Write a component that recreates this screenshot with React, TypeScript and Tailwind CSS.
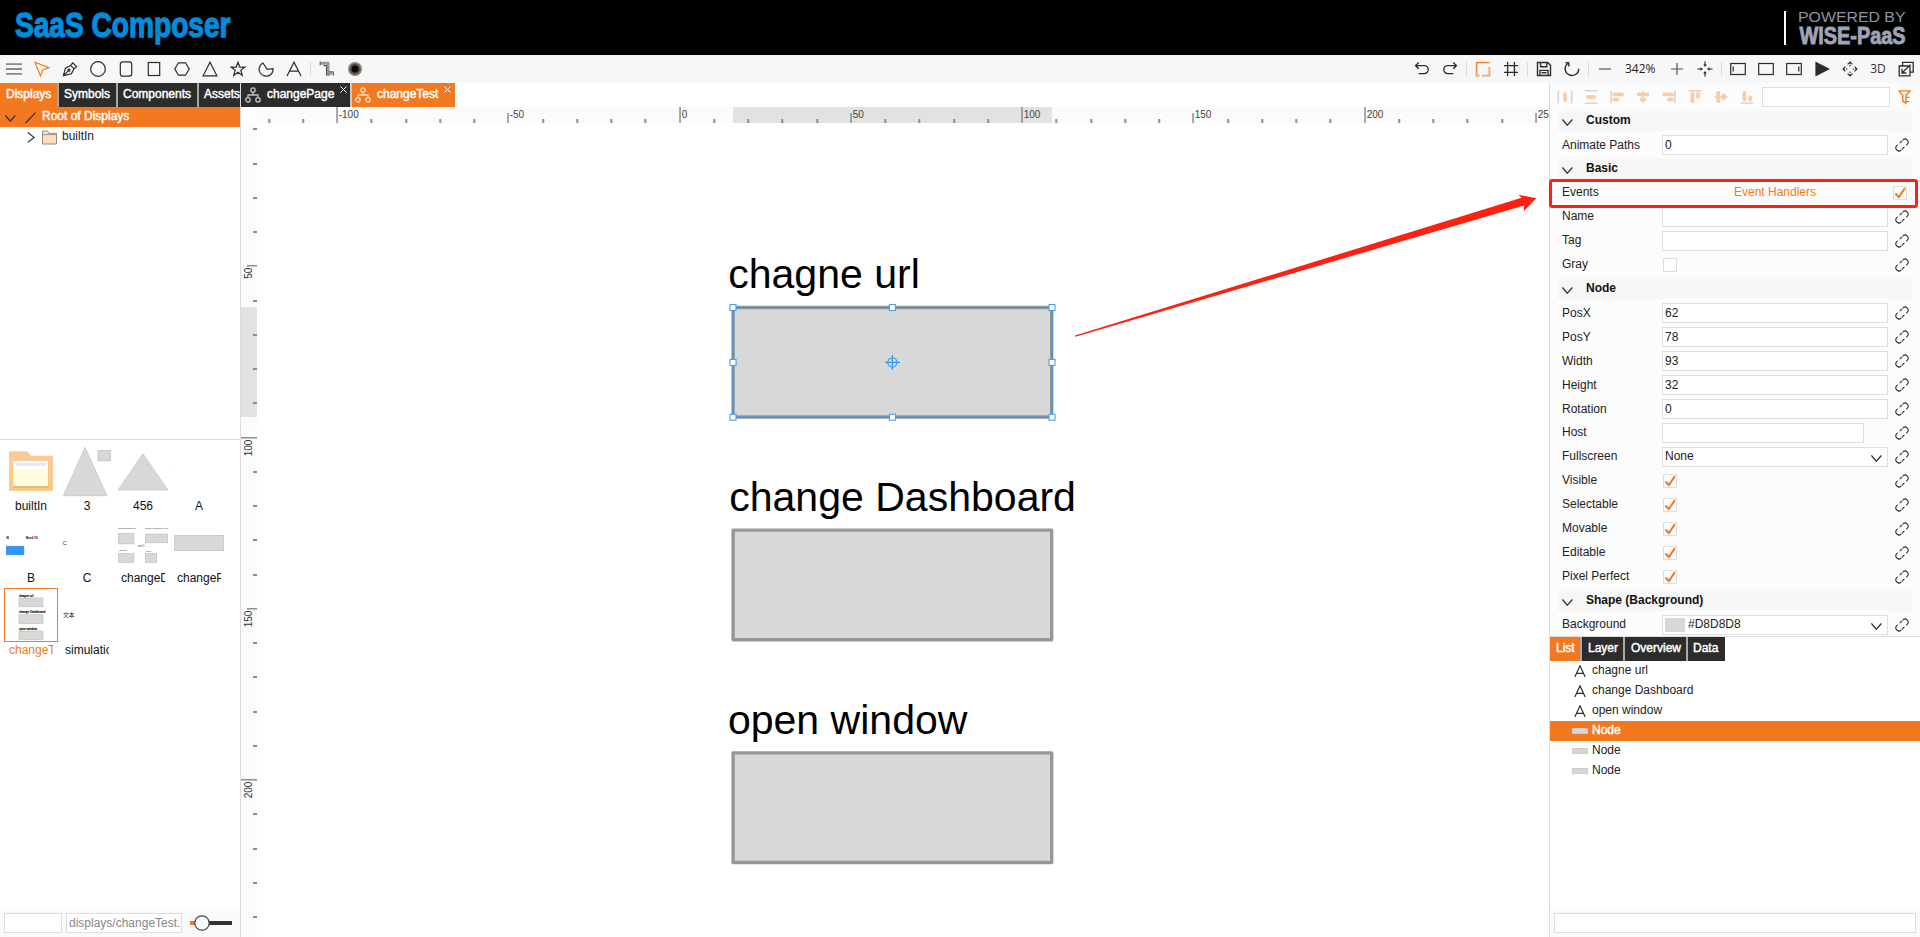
import React from "react";

type Kids = { children?: React.ReactNode };

const INK = "#2c2c2c";
const ORANGE = "#f37920";
const SCALE = 3.425;
const ORIGIN_X = 680;
const ORIGIN_Y = 95.1;

const BOLDISH = "[-webkit-text-stroke:0.45px_currentColor]";

function Icon({ children, color = INK, w = 1.2 }: Kids & { color?: string; w?: number }) {
  return (
    <svg className="h-4 w-4 shrink-0" viewBox="0 0 16 16" fill="none" stroke={color} strokeWidth={w}>
      {children}
    </svg>
  );
}

function Sep() {
  return <span className="-mx-1 h-3.5 w-px shrink-0 bg-[#dcdcdc]" />;
}

function Header() {
  return (
    <header className="flex h-[55px] shrink-0 items-start justify-between bg-black">
      <svg className="h-[55px] w-60 overflow-visible" viewBox="0 0 240 55">
        <text x="15" y="37" textLength="215.5" lengthAdjust="spacingAndGlyphs" fontSize="34.5" fontWeight="700" fill="#008cdc" stroke="#008cdc" strokeWidth="1.3">
          SaaS Composer
        </text>
      </svg>
      <div className="flex pt-[11px] pr-3">
        <span className="h-[34px] w-[2px] bg-white" />
        <svg className="h-9 w-[122px] overflow-visible" viewBox="1786 11 122 36">
          <text x="1798" y="22" textLength="107.5" lengthAdjust="spacingAndGlyphs" fontSize="15" fill="#8c93a5">
            POWERED BY
          </text>
          <text x="1799.5" y="43.8" textLength="106" lengthAdjust="spacingAndGlyphs" fontSize="23.5" fontWeight="700" fill="#9ea5b8" stroke="#9ea5b8" strokeWidth="0.9">
            WISE-PaaS
          </text>
        </svg>
      </div>
    </header>
  );
}

function Toolbar() {
  return (
    <div className="flex h-7 shrink-0 items-center justify-between bg-[#f7f7f7] pr-[6px] pl-[6px]">
      <div className="flex items-center gap-3">
        <Icon color="#8a8a8a" w={1.8}><path d="M0 3.2h16M0 8h16M0 12.8h16" /></Icon>
        <Icon color={ORANGE}><path d="M1 1.2L14.8 6.7L8.6 9L6.4 15Z" /></Icon>
        <Icon>
          <path d="M1.4 14.6L3.4 7.2L8.6 4.4L12 7.8L9.4 12.8ZM1.4 14.6L6.6 9.6M8.6 4.4L10.8 1.8L14.6 5.6L12 7.8" />
          <circle cx="7" cy="9.2" r="1" />
        </Icon>
        <Icon><circle cx="8" cy="8" r="7.3" /></Icon>
        <Icon><rect x="2.3" y="0.8" width="11.4" height="14.4" rx="2.4" /></Icon>
        <Icon><rect x="2.3" y="1.5" width="11.4" height="13" /></Icon>
        <Icon><path d="M4.4 1.8h7.2L15.2 8l-3.6 6.2H4.4L0.8 8Z" /></Icon>
        <Icon><path d="M8 1.2L14.9 14.8H1.1Z" /></Icon>
        <Icon><path d="M8 1.2l1.8 4.9h5l-4 3.1 1.5 5.2L8 11.3l-4.3 3.1 1.5-5.2-4-3.1h5Z" /></Icon>
        <Icon><path d="M4.9 2A7 7 0 1 0 15.1 7.6L9.2 8.3Z" /></Icon>
        <Icon><path d="M1 15L8 1.2L15 15M3.4 10.2h9.2" /></Icon>
        <Sep />
        <Icon color="#808080" w={1.1}>
          <path d="M1.5 2.2h7.5v10h4.5" stroke="#9a9a9a" strokeWidth="3" />
          <path d="M1.2 0.6v3.6M14.4 10.4v4M4.5 4.6h3v9.4h3.4M9.6 10.8h4" stroke="#555" />
        </Icon>
        <svg className="h-4 w-4" viewBox="0 0 16 16">
          <circle cx="8" cy="8" r="7" fill="#7d8378" />
          <circle cx="8" cy="8" r="5.2" fill="#4d4f48" />
          <circle cx="8" cy="8" r="3.4" fill="#1b0204" />
        </svg>
      </div>
      <div className="flex items-center gap-3">
        <Icon w={1.4}><path d="M4.8 1.4L1.6 4.6L4.8 7.8M1.8 4.6h8.4a3.9 3.9 0 0 1 0 8H4.6" /></Icon>
        <Icon w={1.4}><path d="M11.2 1.4L14.4 4.6L11.2 7.8M14.2 4.6H5.8a3.9 3.9 0 0 0 0 8h5.6" /></Icon>
        <Sep />
        <Icon color={ORANGE} w={1.4}>
          <path d="M1.6 15.2V1.6h13" />
          <path d="M1.6 9.5v5h3M14.4 6v8.6H7" stroke="#f6a873" strokeWidth="1.8" />
        </Icon>
        <Icon w={1.3}><path d="M4.6 1v14M11.4 1v14M1 4.6h14M1 11.4h14" /></Icon>
        <Sep />
        <Icon w={1.4}><path d="M1.5 1.5h10.2l2.8 2.8v10.2h-13ZM4.6 1.8v4h6.2v-4M4 14.4V9.4h8v5M5.6 11.8h4.8" /></Icon>
        <Icon w={1.4}><path d="M4.2 2.3A6.8 6.8 0 1 0 14.8 8M1.4 1.9l3.4 0.2v3.6" transform="translate(0 -0.3)" /></Icon>
        <Sep />
        <Icon color="#555"><path d="M2 8h12" /></Icon>
        <span className="w-8 font-['Open_Sans'] text-xs whitespace-nowrap text-[#222]">342%</span>
        <Icon color="#555"><path d="M2 8h12M8 2v12" /></Icon>
        <Icon>
          <path d="M8 0.5v4.6M8 10.9v4.6M0.5 8h4.6M10.9 8h4.6" />
          <path d="M8 6L6.2 3.4h3.6ZM8 10l1.8 2.6H6.2ZM6 8L3.4 6.2v3.6ZM10 8l2.6-1.8v3.6Z" fill={INK} stroke="none" />
        </Icon>
        <Sep />
        <Icon><rect x="0.7" y="2.5" width="14.6" height="11" /><path d="M3.2 5.4v5.2" /></Icon>
        <Icon><rect x="0.7" y="2.5" width="14.6" height="11" /></Icon>
        <Icon><rect x="0.7" y="2.5" width="14.6" height="11" /><path d="M12.8 5.4v5.2" /></Icon>
        <Icon><path d="M2 1.6L14.6 8L2 14.4Z" fill={INK} /></Icon>
        <Icon w={1.1}>
          <path d="M5.6 3.4L8 1l2.4 2.4M5.6 12.6L8 15l2.4-2.4M3.4 5.6L1 8l2.4 2.4M12.6 5.6L15 8l-2.4 2.4" />
          <path d="M8 1.4v4M8 10.6v4M1.4 8h4M10.6 8h4" strokeDasharray="1.6 0.8" />
        </Icon>
        <span className="w-4 text-center font-['Open_Sans'] text-xs text-[#333]">3D</span>
        <Icon w={1.3}><path d="M4.6 5V1.4h10.6v9.8h-3M1.2 5h10.8v9.8H1.2ZM12.6 3.6L4 12M4 7.8V12h4.4" /></Icon>
      </div>
    </div>
  );
}

function PanelTab({ label, active, box }: { label: string; active?: boolean; box: string }) {
  return (
    <div className={`${box} ${active ? "bg-[#f37920]" : "bg-[#2c2c2c]"} h-6 shrink-0 overflow-hidden text-xs leading-[22px] text-white ${BOLDISH}`}>
      {label}
    </div>
  );
}

function TabGap() {
  return <span className="h-6 w-[2px] shrink-0 bg-[#a8a8a8]" />;
}

const RECT = { fill: "#d8d8d8", stroke: "#bcbcbc", strokeWidth: 0.6 };

function FolderThumb() {
  return (
    <>
      <path d="M5 7.3H23.5L26.5 11.8H49V46.8H5Z" fill="#fdc997" />
      <path d="M6.5 24.5H48V46.5H6.5Z" fill="#f8ca84" />
      <path d="M9 42.5H45V43.6H9Z" fill="#c9a871" />
      <rect x="9.3" y="17" width="34.7" height="8" fill="#fff" />
      <rect x="12" y="19" width="30" height="3" fill="#e8e8e8" />
      <rect x="9.3" y="25" width="34.7" height="17" fill="#fffddc" />
    </>
  );
}

type Thumb = { label: string; fits?: boolean; active?: boolean; art: React.ReactNode };

const THUMBS: Thumb[] = [
  { label: "builtIn", fits: true, art: <FolderThumb /> },
  {
    label: "3", fits: true,
    art: <><path d="M25 3.3L47 51.7H3.3Z" {...RECT} /><rect x="38" y="6.3" width="12.8" height="10.6" {...RECT} /></>,
  },
  { label: "456", fits: true, art: <path d="M27 9.7L52 46H2Z" {...RECT} /> },
  { label: "A", fits: true, art: <text x="2.8" y="22.8" fontSize="2" fill="#222">A</text> },
  {
    label: "B", fits: true,
    art: (
      <>
        <text x="2.6" y="22.8" fontSize="3.6" fill="#111" stroke="#111" strokeWidth="0.15">B</text>
        <text x="22" y="22.8" fontSize="3.3" fill="#111" stroke="#111" strokeWidth="0.15">Bord 13</text>
        <rect x="2.3" y="30.2" width="17.6" height="8.6" fill="#3296ff" stroke="#2a86ea" strokeWidth="0.6" />
      </>
    ),
  },
  { label: "C", fits: true, art: <text x="2.8" y="28.6" fontSize="5.6" fill="#333">C</text> },
  {
    label: "changeDashboard",
    art: (
      <>
        <text x="2" y="13" fontSize="2.2" fill="#333">changeDashboard</text>
        <text x="29" y="13" fontSize="2.2" fill="#333">change Dashboard new</text>
        <rect x="2.3" y="17.3" width="15.6" height="10.6" {...RECT} />
        <rect x="29.3" y="18" width="22.4" height="8.8" {...RECT} />
        <text x="22" y="30.6" fontSize="2.6" fill="#333">text 1</text>
        <text x="3" y="35" fontSize="2.4" fill="#333">change</text>
        <text x="30" y="36" fontSize="2.4" fill="#333">open</text>
        <rect x="2.6" y="37.6" width="15.3" height="8.8" {...RECT} />
        <rect x="29.3" y="37.6" width="11.4" height="8.8" {...RECT} />
      </>
    ),
  },
  { label: "changePage", art: <rect x="2.3" y="19.3" width="49.4" height="15.4" {...RECT} /> },
  {
    label: "changeTest", active: true,
    art: (
      <>
        <text x="15" y="8.6" fontSize="3.1" fill="#000" stroke="#000" strokeWidth="0.15">chagne url</text>
        <rect x="15" y="10" width="24" height="8.8" {...RECT} />
        <text x="15" y="25.4" fontSize="3.1" fill="#000" stroke="#000" strokeWidth="0.15">change Dashboard</text>
        <rect x="15" y="26.8" width="24" height="8.8" {...RECT} />
        <text x="15" y="42" fontSize="3.1" fill="#000" stroke="#000" strokeWidth="0.15">open window</text>
        <rect x="15" y="43" width="24" height="8.8" {...RECT} />
      </>
    ),
  },
  {
    label: "simulation",
    art: <text x="3" y="29" fontSize="5.8" fill="#222" fontFamily="'Noto Sans CJK SC', sans-serif">文本</text>,
  },
];

function LeftPanel() {
  return (
    <aside className="flex w-[241px] shrink-0 flex-col border-r border-[#dcdcdc] bg-white">
      <div className="flex shrink-0 overflow-hidden">
        <PanelTab label="Displays" active box="w-[57px] pl-1.5" />
        <TabGap />
        <PanelTab label="Symbols" box="w-[57px] pl-[5px]" />
        <TabGap />
        <PanelTab label="Components" box="w-[79px] pl-[5px]" />
        <TabGap />
        <PanelTab label="Assets" box="w-[41px] pl-[5px]" />
      </div>
      <div className="flex h-5 shrink-0 items-center bg-[#f37920] pl-[5px]">
        <svg className="mt-[3px] h-[7px] w-[11px]" viewBox="0 0 11 7" fill="none" stroke={INK} strokeWidth="1.2"><path d="M0.4 0.5L5.2 6.2L10.2 0.5" /></svg>
        <svg className="mt-0.5 ml-[9px] h-3 w-3" viewBox="0 0 12 12" fill="none" stroke={INK} strokeWidth="1.1"><path d="M0.5 11L10.6 0.6" /></svg>
        <span className={`ml-[5px] text-xs leading-[18px] text-white ${BOLDISH} pb-0.5`}>Root of Displays</span>
      </div>
      <div className="flex h-5 shrink-0 items-center pl-[27px]">
        <svg className="mt-px h-[11px] w-2" viewBox="0 0 8 11" fill="none" stroke={INK} strokeWidth="1.2"><path d="M0.8 0.5L7 5.4L0.8 10.4" /></svg>
        <svg className="mt-px ml-[7px] h-[15px] w-[15px]" viewBox="0 0 15 15">
          <path d="M0.5 1H5.5L7 3.4H14.5V14H0.5Z" fill="#fddfbf" stroke="#8d8d8d" />
          <path d="M0.5 4.6H14.5" stroke="#a09488" />
        </svg>
        <span className="ml-[5px] pb-0.5 text-xs leading-[18px] text-[#222]">builtIn</span>
      </div>
      <div className="flex-1" />
      <div className="h-[470px] shrink-0 border-t border-[#dcdcdc] pt-1 pl-[3px]">
        <div className="grid grid-cols-[repeat(4,56px)] auto-rows-[72px] pl-px">
          {THUMBS.map((t) => (
            <div key={t.label} className="flex flex-col items-start">
              <svg className={`h-[54px] w-[54px] shrink-0 ${t.active ? "outline outline-1 -outline-offset-1 outline-[#f37920]" : ""}`} viewBox="0 0 54 54">
                {t.art}
              </svg>
              <div className={`ml-[5px] w-11 overflow-hidden text-xs leading-4 whitespace-nowrap ${t.fits ? "text-center" : "text-left"} ${t.active ? "text-[#f37920]" : "text-[#111]"}`}>
                {t.label}
              </div>
            </div>
          ))}
        </div>
      </div>
      <div className="flex h-7 shrink-0 items-center bg-[#fafafa] pl-1">
        <div className="h-5 w-[58px] border border-[#dedede] bg-white" />
        <div className="ml-1 h-5 w-[116px] overflow-hidden border border-[#dedede] bg-white pr-[1px] pl-0.5 text-xs leading-[18px] whitespace-nowrap text-[#888]">
          displays/changeTest.
        </div>
        <svg className="ml-2 h-4 w-[42px]" viewBox="0 0 42 16">
          <rect x="0" y="6" width="6" height="4" fill={ORANGE} />
          <rect x="12" y="6" width="30" height="4" fill="#333" />
          <circle cx="12" cy="8" r="7.2" fill="#fafafa" stroke="#444" strokeWidth="1.2" />
        </svg>
      </div>
    </aside>
  );
}

function DocTab({ label, active, box }: { label: string; active?: boolean; box: string }) {
  return (
    <div className={`flex h-6 ${box} ${active ? "bg-[#f37920]" : "bg-[#2c2c2c]"}`}>
      <svg className="mt-1 h-4 w-4 shrink-0" viewBox="0 0 16 16" fill="none" stroke={active ? "#fbd9bf" : "#c4c4c4"} strokeWidth="1.3">
        <circle cx="8" cy="3" r="2.2" />
        <circle cx="3" cy="12.8" r="2.2" />
        <circle cx="13" cy="12.8" r="2.2" />
        <path d="M8 5.2V8M3 10.6V8h10v2.6" />
      </svg>
      <span className={`ml-1.5 text-xs leading-[22px] text-white ${BOLDISH}`}>{label}</span>
      <svg className="mt-[3px] ml-auto h-[7px] w-[7px]" viewBox="0 0 7 7" stroke="#fff" strokeWidth="1"><path d="M0.5 0.5l6 6M6.5 0.5l-6 6" /></svg>
    </div>
  );
}

const H_TICKS = Array.from({ length: 38 }, (_, i) => (i - 12) * 10);
const V_TICKS = Array.from({ length: 24 }, (_, i) => (i + 1) * 10);

function HRuler() {
  return (
    <svg className="h-4 flex-1" viewBox="257 107 1292 16">
      <rect x="257" y="107" width="1292" height="16" fill="#fbfbfb" />
      <rect x="733" y="107" width="319" height="16" fill="#e2e2e2" />
      {H_TICKS.map((v) => {
        const x = Math.round(ORIGIN_X + v * SCALE - 0.3);
        const major = v % 50 === 0;
        const top = v % 100 === 0 ? 107 : major ? 113 : 119;
        return (
          <g key={v}>
            <rect x={x - 0.7} y={top} width={major ? 1.5 : 2} height={123 - top} fill="#8e8e8e" />
            {major && <text x={x + 1.7} y="118" fontSize="10" fill="#444">{v}</text>}
          </g>
        );
      })}
    </svg>
  );
}

function VRuler() {
  return (
    <svg className="h-[814px] w-4 shrink-0" viewBox="241 123 16 814">
      <rect x="241" y="123" width="16" height="814" fill="#fbfbfb" />
      <rect x="241" y="307" width="16" height="110" fill="#e2e2e2" />
      {V_TICKS.map((v) => {
        const y = Math.round(ORIGIN_Y + v * SCALE);
        const major = v % 50 === 0;
        const left = v % 100 === 0 ? 241 : major ? 247 : 253;
        return (
          <g key={v}>
            <rect x={left} y={y - 1} width={257 - left} height={major ? 1.5 : 2} fill="#8e8e8e" />
            {major && (
              <text transform={`translate(252.4 ${y + 1.6}) rotate(-90)`} textAnchor="end" fontSize="10" fill="#333">{v}</text>
            )}
          </g>
        );
      })}
    </svg>
  );
}

const NODES = [307.45, 530.1, 752.9];
const LABELS = [
  { x: 728.2, y: 288, text: "chagne url" },
  { x: 729.2, y: 510.8, text: "change Dashboard" },
  { x: 727.9, y: 733.6, text: "open window" },
];
const HANDLES = [
  [733, 307.5], [892.4, 307.5], [1052, 307.5],
  [733, 362.4], [1052, 362.4],
  [733, 417.2], [892.4, 417.2], [1052, 417.2],
];

function Canvas() {
  return (
    <main className="flex w-[1308px] shrink-0 flex-col bg-white">
      <div className="flex shrink-0">
        <DocTab label="changePage" box="w-[109px] pl-1 pr-[3px]" />
        <span className="h-6 w-[2px] bg-[#d2c8c0]" />
        <DocTab label="changeTest" active box="w-[103px] pl-[3px] pr-1" />
      </div>
      <div className="flex shrink-0">
        <span className="h-4 w-4 bg-white" />
        <HRuler />
      </div>
      <div className="flex">
        <VRuler />
        <svg className="h-[814px] w-[1292px]" viewBox="257 123 1292 814">
          {NODES.map((y) => (
            <rect key={y} x="733.1" y={y} width="318.6" height="109.6" fill="#d8d8d8" stroke="#979797" strokeWidth="3.4" strokeLinejoin="round" />
          ))}
          {LABELS.map((l) => (
            <text key={l.text} x={l.x} y={l.y} fontSize="41.04" fill="#000">{l.text}</text>
          ))}
          <rect x="733" y="307.5" width="319" height="109.7" fill="none" stroke="#3c92ea" strokeWidth="1.4" />
          {HANDLES.map(([x, y]) => (
            <rect key={`${x}-${y}`} x={x - 3} y={y - 3} width="6" height="6" fill="#fff" stroke="#4a9ff5" strokeWidth="1.1" />
          ))}
          <g fill="none" stroke="#3296ff" strokeWidth="1.2">
            <circle cx="892.4" cy="362.4" r="4.6" />
            <path d="M885 362.4h15M892.4 354.8v15.2" />
          </g>
          <path d="M1075 335.6L1521.6 197.8L1518.3 194.7L1536.3 198.3L1523.7 211.3L1524.2 205.6L1075.4 336.8Z" fill="#fe2011" />
        </svg>
      </div>
    </main>
  );
}

const G = { stroke: "#d4d4d4", strokeWidth: 1.6 };
const P = { stroke: "#fbcba4", strokeWidth: 3.8, strokeLinecap: "round" as const };

const ALIGN_ICONS: [string, string][] = [
  ["M1.3 1.7v12.6M14.7 1.7v12.6", "M8 5.2v5.6"],
  ["M1.8 1.7h12.6M1.8 14.3h12.6", "M5 8h6"],
  ["M2 1.7v12.6", "M5.2 5.4h7.8M5.2 10.6h3.2"],
  ["M8 1.7v12.6", "M3.6 5.4h8.8M6.6 10.6h2.8"],
  ["M14 1.7v12.6", "M3.2 5.4h7.8M7.8 10.6h3.2"],
  ["M1.6 1.8h12.8", "M5.4 5v7.2M11 5v3"],
  ["M1.4 8h13.2", "M5.2 3.7v8.6M10.8 6.4v3.2"],
  ["M1.6 14.1h12.8", "M5.4 3.8v6.8M11.2 8.4v2.2"],
];

function LinkIcon() {
  return (
    <svg className="mt-[3px] ml-[7px] h-[14px] w-[14px] shrink-0" viewBox="0 0 14 14" fill="none" stroke={INK} strokeWidth="1.1">
      <g transform="rotate(-43 7 7)">
        <path d="M6.6 4h4.6a3 3 0 0 1 0 6H10" strokeDasharray="3.6 0.7 20" />
        <path d="M7.4 10H2.8a3 3 0 0 1 0-6H4" strokeDasharray="3.6 0.7 20" />
      </g>
    </svg>
  );
}

function Check({ on }: { on?: boolean }) {
  return (
    <span className="mt-[3px] block h-[14px] w-[14px] shrink-0 border border-[#dedede] bg-white">
      {on && (
        <svg className="h-3 w-3" viewBox="0 0 12 12" fill="none" stroke={ORANGE} strokeWidth="2.1"><path d="M1.4 6.6L4.8 10L11 1" /></svg>
      )}
    </span>
  );
}

function Down({ cls }: { cls: string }) {
  return (
    <svg className={`h-[7px] w-[11px] shrink-0 ${cls}`} viewBox="0 0 11 7" fill="none" stroke={INK} strokeWidth="1.2"><path d="M0.4 0.5L5.3 6.2L10.4 0.5" /></svg>
  );
}

function Group({ title }: { title: string }) {
  return (
    <div className="ml-2 flex h-5 w-[354px] bg-[#f6f6f6] pl-1">
      <Down cls="mt-2" />
      <span className="ml-[13px] text-xs leading-[18px] font-bold text-[#111]">{title}</span>
    </div>
  );
}

function Row({ label, children, low, link = true }: Kids & { label: string; low?: boolean; link?: boolean }) {
  return (
    <div className="flex h-5 pl-3">
      <span className={`w-[100px] shrink-0 text-xs text-[#222] ${low ? "leading-5" : "leading-[18px]"}`}>{label}</span>
      <div className="flex w-[226px] shrink-0">{children}</div>
      {link && <LinkIcon />}
    </div>
  );
}

function Field({ value, low, narrow }: { value?: string; low?: boolean; narrow?: boolean }) {
  return (
    <div className={`h-5 border border-[#dedede] bg-white pl-0.5 text-xs text-[#222] ${low ? "leading-[18px]" : "leading-4"} ${narrow ? "w-[202px]" : "w-full"}`}>
      {value}
    </div>
  );
}

function CheckRow({ label, on = true }: { label: string; on?: boolean }) {
  return (
    <Row label={label}>
      <span className="w-px" />
      <Check on={on} />
    </Row>
  );
}

function NumRow({ label, value }: { label: string; value: string }) {
  return <Row label={label} low><Field value={value} low /></Row>;
}

function Properties() {
  return (
    <div className="relative h-[554px] shrink-0 border-b border-[#dcdcdc] bg-[#fcfcfc]">
      <div className="flex h-7 items-center pl-[7px]">
        <div className="flex gap-[10px]">
          {ALIGN_ICONS.map(([g, p]) => (
            <svg key={g + p} className="h-4 w-4" viewBox="0 0 16 16" fill="none"><path d={g} {...G} /><path d={p} {...P} /></svg>
          ))}
        </div>
        <div className="ml-[7px] h-5 w-32 border border-[#dedede] bg-white" />
        <svg className="ml-2 h-[14px] w-[13px]" viewBox="0 0 13 14" fill="none" stroke={ORANGE} strokeWidth="1.4">
          <path d="M0.6 0.9h11.6L8 5.4v8M0.8 1L4.8 5.4v5.8L8 13.4M8.4 7.4h3M8.4 11.6h2.6" />
        </svg>
      </div>
      <div className="flex flex-col gap-1">
        <Group title="Custom" />
        <NumRow label="Animate Paths" value="0" />
        <Group title="Basic" />
        <Row label="Events" link={false}>
          <span className="w-full shrink-0 text-center text-xs leading-[18px] text-[#f37920]">Event Handlers</span>
          <span className="w-[5px] shrink-0" />
          <Check on />
        </Row>
        <Row label="Name"><Field /></Row>
        <Row label="Tag"><Field /></Row>
        <CheckRow label="Gray" on={false} />
        <Group title="Node" />
        <NumRow label="PosX" value="62" />
        <NumRow label="PosY" value="78" />
        <NumRow label="Width" value="93" />
        <NumRow label="Height" value="32" />
        <NumRow label="Rotation" value="0" />
        <Row label="Host"><Field narrow /></Row>
        <Row label="Fullscreen">
          <div className="flex h-5 w-full justify-between border border-[#dedede] bg-white pr-[5px] pl-0.5 text-xs leading-4 text-[#222]">
            None
            <Down cls="mt-[7px]" />
          </div>
        </Row>
        <CheckRow label="Visible" />
        <CheckRow label="Selectable" />
        <CheckRow label="Movable" />
        <CheckRow label="Editable" />
        <CheckRow label="Pixel Perfect" />
        <Group title="Shape (Background)" />
        <Row label="Background">
          <div className="flex h-5 w-full border border-[#dedede] bg-white pr-[5px] pl-0.5 text-xs leading-4 text-[#222]">
            <span className="mt-[2px] mr-[3px] h-[14px] w-5 bg-[#d8d8d8]" />
            #D8D8D8
            <Down cls="mt-[7px] ml-auto" />
          </div>
        </Row>
      </div>
      <div className="absolute top-24 -left-px h-[29px] w-[369px] rounded-[3px] border-[3px] border-[#fe2011]" />
    </div>
  );
}

const LIST = [
  { label: "chagne url", text: true },
  { label: "change Dashboard", text: true },
  { label: "open window", text: true },
  { label: "Node", active: true },
  { label: "Node" },
  { label: "Node" },
];

function RightPanel() {
  return (
    <aside className="flex w-[371px] shrink-0 flex-col border-l border-[#dcdcdc] bg-white">
      <Properties />
      <div className="flex shrink-0">
        <PanelTab label="List" active box="w-[30px] pl-1.5" />
        <TabGap />
        <PanelTab label="Layer" box="w-[41px] pl-1.5" />
        <TabGap />
        <PanelTab label="Overview" box="w-[61px] pl-[6px]" />
        <TabGap />
        <PanelTab label="Data" box="w-[37px] pl-[5px]" />
      </div>
      <div className="flex-1">
        {LIST.map((r, i) => (
          <div key={i} className={`flex h-5 pl-[22px] text-xs leading-[18px] ${r.active ? `bg-[#f37920] text-white ${BOLDISH}` : "text-[#222]"}`}>
            {r.text ? (
              <svg className="mt-1 mr-1 h-3 w-4" viewBox="0 0 16 12" fill="none" stroke={INK} strokeWidth="1.2"><path d="M2.8 12L8 0.8L13.2 12M4.8 8.4h6.4" /></svg>
            ) : (
              <span className="mt-[7px] mr-1 h-1.5 w-4 border border-[#cdcdcd] bg-[#d6d6d6]" />
            )}
            {r.label}
          </div>
        ))}
      </div>
      <div className="flex h-7 shrink-0 items-center bg-[#fafafa] px-1">
        <div className="h-5 w-full border border-[#dedede] bg-white" />
      </div>
    </aside>
  );
}

export default function App() {
  return (
    <div className="flex h-[937px] w-[1920px] flex-col overflow-hidden bg-white font-['Liberation_Sans',Arial,sans-serif]">
      <Header />
      <Toolbar />
      <div className="flex h-[854px]">
        <LeftPanel />
        <Canvas />
        <RightPanel />
      </div>
    </div>
  );
}
